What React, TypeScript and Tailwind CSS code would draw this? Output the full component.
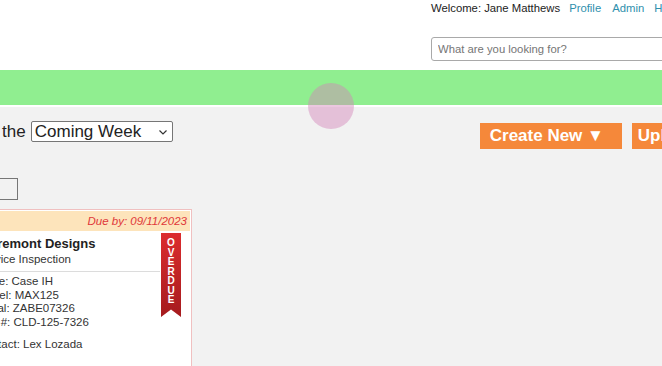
import React from 'react';

const details = [
    { label: 'Make', value: 'Case IH' },
    { label: 'Model', value: 'MAX125' },
    { label: 'Serial', value: 'ZABE07326' },
    { label: 'Unit #', value: 'CLD-125-7326' },
];

function Ribbon() {
    return (
        <div className="absolute top-[2px] right-[9px] w-[20px] h-[84px] bg-gradient-to-b from-[#dc2c2e] to-[#a51b1e] [clip-path:polygon(0_0,100%_0,100%_100%,50%_91%,0_100%)] flex flex-col items-center pt-[5px]">
            {'OVERDUE'.split('').map((ch, i) => (
                <span key={i} className="text-white font-bold text-[10px] leading-[9.5px]">{ch}</span>
            ))}
        </div>
    );
}

export default function App() {
    return (
        <div className="relative w-[662px] h-[366px] overflow-hidden bg-[#f2f2f2] font-['Liberation_Sans',Arial,sans-serif] text-[#222]">
            {/* Header */}
            <header className="bg-white h-[70px] pl-[431px]">
                <div className="w-[400px] pt-[2px]">
                    <div className="flex whitespace-nowrap text-[11.3px] leading-[13px]">
                        <span className="text-[#222]">Welcome: Jane Matthews</span>
                        <a className="ml-[9px] text-[#2f90ad]">Profile</a>
                        <a className="ml-[11px] text-[#2f90ad]">Admin</a>
                        <a className="ml-[10px] text-[#2f90ad]">Help</a>
                    </div>
                    <input
                        placeholder="What are you looking for?"
                        className="mt-[22px] w-[260px] h-[24px] border border-[#a9a9a9] rounded-[3px] bg-white pl-[6px] text-[11.3px] placeholder:text-[#757575] outline-none"
                    />
                </div>
            </header>

            {/* Green nav bar */}
            <div className="h-[37px] bg-[#90ee90] border-b-2 border-white" />

            {/* Filter + actions */}
            <div className="flex items-start whitespace-nowrap">
                <div className="flex items-center mt-[14px] ml-[-82px] text-[17px] leading-[21px]">
                    <span>Due within the</span>
                    <div className="relative ml-[5px] h-[21px]">
                        <select className="appearance-none w-[142px] h-[21px] border border-[#767676] rounded-[2px] bg-white pl-[3px] text-[17px] leading-[19px] text-[#222]">
                            <option>Coming Week</option>
                        </select>
                        <svg className="absolute right-[6px] top-[9px] pointer-events-none" width="8" height="5" viewBox="0 0 8 5">
                            <path d="M0.5 0.5 L4 4 L7.5 0.5" fill="none" stroke="#333" strokeWidth="1.2" />
                        </svg>
                    </div>
                </div>
                <div className="flex mt-[16px] ml-[307px] gap-[10px]">
                    <button className="w-[142px] h-[26px] bg-[#f5883a] text-white font-bold text-[17px] leading-[26px] text-left pl-[10px]">
                        Create New ▼
                    </button>
                    <button className="w-[90px] h-[26px] bg-[#f5883a] text-white font-bold text-[17px] leading-[26px] text-left pl-[6px]">
                        Upload
                    </button>
                </div>
            </div>

            {/* Search box */}
            <input className="block mt-[29px] ml-[-102px] w-[120px] h-[22px] border border-[#767676] bg-transparent" />

            {/* Job card */}
            <div className="mt-[9px] ml-[-31px] w-[223px] border border-[#f0c0c0] p-[1px] bg-white">
                <div className="h-[20px] bg-[#fde4bb] text-right pr-[3px] text-[11.5px] leading-[20px] italic text-[#e0383a]">
                    Due by: 09/11/2023
                </div>
                <div className="relative pl-[6px] pr-[30px] pt-[5px] pb-[20px]">
                    <div className="font-bold text-[13px] leading-[15px] text-[#222]">Claremont Designs</div>
                    <div className="mt-[2px] text-[11.5px] leading-[13px] text-[#333] pb-[5px] border-b border-[#dcdcdc]">Service Inspection</div>
                    <div className="pt-[3px] text-[11.5px] leading-[13.5px] text-[#333]">
                        {details.map((d) => (
                            <div key={d.label}>{d.label}: {d.value}</div>
                        ))}
                        <div className="mt-[9px]">Contact: Lex Lozada</div>
                    </div>
                    <Ribbon />
                </div>
            </div>

            {/* Cursor highlight */}
            <div className="absolute left-[308px] top-[83px] w-[46px] h-[46px] rounded-full bg-[rgba(210,130,185,0.45)] pointer-events-none" />
        </div>
    );
}
